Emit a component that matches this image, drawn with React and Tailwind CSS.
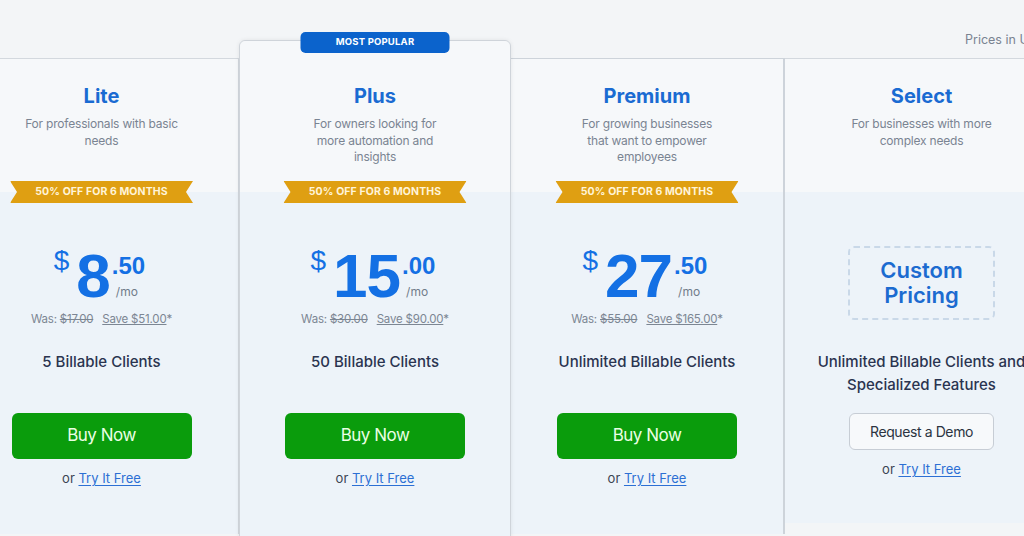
import React from 'react';

const plans = [
    {
        name: 'Lite',
        desc: ['For professionals with basic', 'needs'],
        dollars: '8',
        cents: '.50',
        was: '$17.00',
        save: 'Save $51.00',
        clients: '5 Billable Clients',
    },
    {
        name: 'Plus',
        desc: ['For owners looking for', 'more automation and', 'insights'],
        dollars: '15',
        cents: '.00',
        was: '$30.00',
        save: 'Save $90.00',
        clients: '50 Billable Clients',
        popular: true,
    },
    {
        name: 'Premium',
        desc: ['For growing businesses', 'that want to empower', 'employees'],
        dollars: '27',
        cents: '.50',
        was: '$55.00',
        save: 'Save $165.00',
        clients: 'Unlimited Billable Clients',
    },
];

function Ribbon() {
    return (
        <div className="absolute left-1/2 -translate-x-1/2 -bottom-[11px] z-10 w-[183px] h-[22px] bg-[#df9f12] flex items-center justify-center [clip-path:polygon(0_0,100%_0,calc(100%_-_7px)_50%,100%_100%,0_100%,7px_50%)]">
            <span className="text-[10.5px] font-bold text-[#fff4d8] tracking-[0.1px] whitespace-nowrap">
                50% OFF FOR 6 MONTHS
            </span>
        </div>
    );
}

function TryFree() {
    return (
        <div className="mt-[10px] text-[13px] leading-[18px] text-[#3b4452] text-center">
            or <span className="text-[#2c6fd4] underline underline-offset-2">Try It Free</span>
        </div>
    );
}

function Upper({ name, desc, popular }) {
    return (
        <div className={`relative bg-[#f6f8fa] text-center ${popular ? 'h-[151px] pt-[43px] rounded-t-[6px]' : 'h-[133px] pt-[25px]'}`}>
            {popular && (
                <div className="absolute left-1/2 -translate-x-1/2 -top-[9px] w-[149px] h-[21px] rounded-[5px] bg-[#0b63cc] flex items-center justify-center">
                    <span className="text-[9.5px] font-bold text-white tracking-[0.2px]">MOST POPULAR</span>
                </div>
            )}
            <h2 className="text-[20px] leading-[24px] font-bold text-[#1a6bd2]">{name}</h2>
            <p className="mt-[8px] text-[12px] leading-[16.5px] text-[#7a8492] tracking-[-0.2px]">
                {desc.map((l, i) => (
                    <span key={i} className="block whitespace-nowrap">{l}</span>
                ))}
            </p>
            {name !== 'Select' && <Ribbon />}
        </div>
    );
}

function PlanCard({ plan, className }) {
    return (
        <div className={`flex flex-col shrink-0 ${className}`}>
            <Upper {...plan} />
            <div className="flex-1 bg-[#edf3f9] flex flex-col items-center pt-[53px]">
                <div className="flex items-start text-[#1470e4] font-['Liberation_Sans',Arial,sans-serif] -ml-[4px]">
                    <span className="text-[28px] leading-none mt-[2px] mr-[7px]">$</span>
                    <span className="text-[62px] leading-none font-bold tracking-[-1px]">{plan.dollars}</span>
                    <div className="flex flex-col ml-[2px]">
                        <span className="text-[24px] leading-none font-bold mt-[9px]">{plan.cents}</span>
                        <span className="text-[12px] leading-[16px] mt-[6px] ml-[4px] text-[#717c8a] font-['Inter',sans-serif]">/mo</span>
                    </div>
                </div>
                <div className="mt-[4px] text-[11.5px] leading-[16px] text-[#7c8693] tracking-[-0.2px] whitespace-nowrap">
                    Was: <span className="line-through">{plan.was}</span>
                    <span className="ml-[9px] underline">{plan.save}</span>*
                </div>
                <div className="mt-[25px] text-[15px] leading-[20px] font-medium text-[#2a3450] whitespace-nowrap">
                    {plan.clients}
                </div>
                <button className="mt-[41px] w-[180px] h-[46px] rounded-[6px] bg-[#0a9c0c] text-[#eaffe4] text-[17px] tracking-[-0.5px]">
                    Buy Now
                </button>
                <TryFree />
            </div>
        </div>
    );
}

export default function App() {
    return (
        <div className="h-[536px] overflow-hidden bg-[#f3f5f7] font-['Inter',sans-serif]">
            <div className="flex items-start -ml-[35px] pt-[22px]">
                <PlanCard plan={plans[0]} className="w-[274px] h-[476px] mt-[36px] border-t border-r border-[#d3d8de]" />
                <PlanCard
                    plan={plans[1]}
                    className="w-[272px] h-[520px] mt-[18px] border border-[#cfd4da] rounded-t-[6px] shadow-[0_0_4px_rgba(0,0,0,0.08)] relative z-10"
                />
                <PlanCard plan={plans[2]} className="w-[274px] h-[476px] mt-[36px] border-t border-r-2 border-[#cdd3da]" />
                <div className="w-[273px] shrink-0 flex flex-col">
                    <div className="h-[36px] flex items-center pl-[180px] text-[12.5px] text-[#7a8391] whitespace-nowrap">
                        Prices in USD
                    </div>
                    <div className="h-[465px] flex flex-col border-t border-[#d3d8de]">
                        <Upper name="Select" desc={['For businesses with more', 'complex needs']} />
                        <div className="flex-1 bg-[#edf3f9] flex flex-col items-center pt-[54px]">
                            <div className="w-[147px] h-[74px] border-2 border-dashed border-[#c9d8e8] rounded-[6px] flex items-center justify-center text-center">
                                <span className="text-[22px] leading-[25px] font-semibold text-[#1c6bd0]">
                                    Custom
                                    <br />
                                    Pricing
                                </span>
                            </div>
                            <div className="mt-[30px] text-[15px] leading-[23px] font-medium text-[#2a3450] text-center whitespace-nowrap">
                                Unlimited Billable Clients and
                                <br />
                                Specialized Features
                            </div>
                            <button className="mt-[17px] w-[145px] h-[37px] rounded-[6px] border border-[#c7cdd5] bg-[#f7f9fb] text-[14px] text-[#2b3441] tracking-[-0.4px]">
                                Request a Demo
                            </button>
                            <TryFree />
                        </div>
                    </div>
                </div>
            </div>
        </div>
    );
}
